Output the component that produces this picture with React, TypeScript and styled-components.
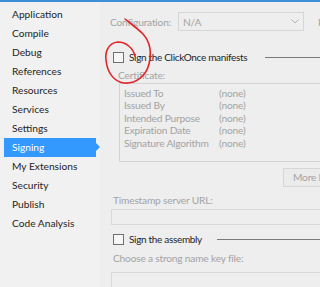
import styled, { createGlobalStyle } from 'styled-components'

const Global = createGlobalStyle`
  html, body {
    margin: 0;
    padding: 0;
    background: #eeeeee;
  }
  body {
    font-family: Lato, 'Noto Sans', sans-serif;
    font-size: 10.2px;
  }
`

const Frame = styled.div`
  position: relative;
  width: 320px;
  height: 287px;
  overflow: hidden;
  border-top: 2px solid #3c8fd6;
  box-sizing: border-box;
  display: flex;
`

const Sidebar = styled.nav`
  width: 100px;
  flex: none;
  padding-top: 3px;
  background: #f1f1f1;
`

const NavItem = styled.div<{ $active?: boolean }>`
  position: relative;
  height: 19px;
  line-height: 19px;
  margin: 0 4px;
  padding-left: 8px;
  color: ${(p) => (p.$active ? '#ffffff' : '#1e1e1e')};
  background: ${(p) => (p.$active ? '#3399ff' : 'transparent')};
  ${(p) =>
    p.$active &&
    `
    &::after {
      content: '';
      position: absolute;
      right: -4px;
      top: 5px;
      border-left: 4px solid #3399ff;
      border-top: 4px solid transparent;
      border-bottom: 4px solid transparent;
    }
  `}
`

const Main = styled.main`
  flex: 1;
  min-width: 0;
  padding-left: 10px;
  display: flex;
  flex-direction: column;
  color: #a3a3a3;
  letter-spacing: -0.2px;
`

const TopRow = styled.div`
  display: flex;
  align-items: center;
  margin-top: 10px;
  height: 19px;
  white-space: nowrap;
`

const Combo = styled.div`
  box-sizing: border-box;
  width: 126px;
  height: 19px;
  margin-left: 7px;
  margin-right: 14px;
  border: 1px solid #d6d6d6;
  display: flex;
  align-items: center;
  justify-content: space-between;
  padding: 0 4px 0 4px;
  flex: none;
`

const Separator = styled.div`
  height: 1px;
  margin-top: 8px;
  margin-left: -3px;
  background: #c9c9c9;
`

const CheckRow = styled.div<{ $top: number }>`
  display: flex;
  align-items: center;
  height: 14px;
  margin-top: ${(p) => p.$top}px;
  margin-left: 3px;
  color: #1e1e1e;
  white-space: nowrap;
  font-size: 10px;
  letter-spacing: -0.32px;
`

const Box = styled.span`
  box-sizing: border-box;
  width: 11px;
  height: 11px;
  border: 1px solid #707070;
  background: #f6f6f6;
  margin-right: 5px;
  flex: none;
`

const Rule = styled.span<{ $gap: number }>`
  flex: 1;
  height: 1px;
  background: #7a7a7a;
  margin-left: ${(p) => p.$gap}px;
`

const Label = styled.div<{ $top: number; $indent?: number }>`
  height: 14px;
  line-height: 14px;
  margin-top: ${(p) => p.$top}px;
  margin-left: ${(p) => p.$indent ?? 3}px;
  white-space: nowrap;
`

const CertBox = styled.div`
  box-sizing: border-box;
  width: 260px;
  height: 79px;
  margin-top: 1px;
  margin-left: 9px;
  border: 1px solid #d3d3d3;
  padding: 3px 0 0 4px;
  flex: none;
`

const CertRow = styled.div`
  display: grid;
  grid-template-columns: 95px auto;
  height: 12.4px;
  line-height: 12.4px;
  white-space: nowrap;
`

const MoreButton = styled.div`
  box-sizing: border-box;
  width: 90px;
  height: 19px;
  line-height: 17px;
  margin-top: 6px;
  margin-left: 173px;
  padding-left: 9px;
  border: 1px solid #d6d6d6;
  background: #ebebeb;
  white-space: nowrap;
  flex: none;
`

const Field = styled.div<{ $top: number }>`
  box-sizing: border-box;
  width: 240px;
  height: 16px;
  margin-top: ${(p) => p.$top}px;
  margin-left: 1px;
  border: 1px solid #dadada;
  flex: none;
`

const Scribble = styled.svg`
  position: absolute;
  left: 0;
  top: -2px;
  pointer-events: none;
`

const pages = [
  'Application',
  'Compile',
  'Debug',
  'References',
  'Resources',
  'Services',
  'Settings',
  'Signing',
  'My Extensions',
  'Security',
  'Publish',
  'Code Analysis',
]

const certRows = [
  'Issued To',
  'Issued By',
  'Intended Purpose',
  'Expiration Date',
  'Signature Algorithm',
]

export default function App() {
  return (
    <Frame>
      <Global />
      <Sidebar>
        {pages.map((p) => (
          <NavItem key={p} $active={p === 'Signing'}>
            {p}
          </NavItem>
        ))}
      </Sidebar>
      <Main>
        <TopRow>
          <span>Configuration:</span>
          <Combo>
            <span>N/A</span>
            <svg width='8' height='5' viewBox='0 0 8 5'>
              <path d='M0.5 0.5 L4 4 L7.5 0.5' fill='none' stroke='#b0b0b0' strokeWidth='1' />
            </svg>
          </Combo>
          <span>Platform:</span>
        </TopRow>
        <Separator />
        <CheckRow $top={12}>
          <Box />
          Sign the ClickOnce manifests
          <Rule $gap={18} />
        </CheckRow>
        <Label $top={5} $indent={8}>
          Certificate:
        </Label>
        <CertBox>
          {certRows.map((r) => (
            <CertRow key={r}>
              <span>{r}</span>
              <span>(none)</span>
            </CertRow>
          ))}
        </CertBox>
        <MoreButton>More Details...</MoreButton>
        <Label $top={6}>Timestamp server URL:</Label>
        <Field $top={2} />
        <CheckRow $top={8}>
          <Box />
          Sign the assembly
          <Rule $gap={15} />
        </CheckRow>
        <Label $top={6}>Choose a strong name key file:</Label>
        <Field $top={7} />
      </Main>
      <Scribble width='320' height='100' viewBox='0 0 320 100'>
        <path
          d='M135 56 C133 48 126 42 118 42 C108 43 105 52 106 60 C107 72 114 82 124 83 C136 84 146 76 149 64 C152 52 150 42 143 34 C137 28 130 23 125 19'
          fill='none'
          stroke='#e0262a'
          strokeWidth='1.6'
          strokeLinecap='round'
        />
      </Scribble>
    </Frame>
  )
}
